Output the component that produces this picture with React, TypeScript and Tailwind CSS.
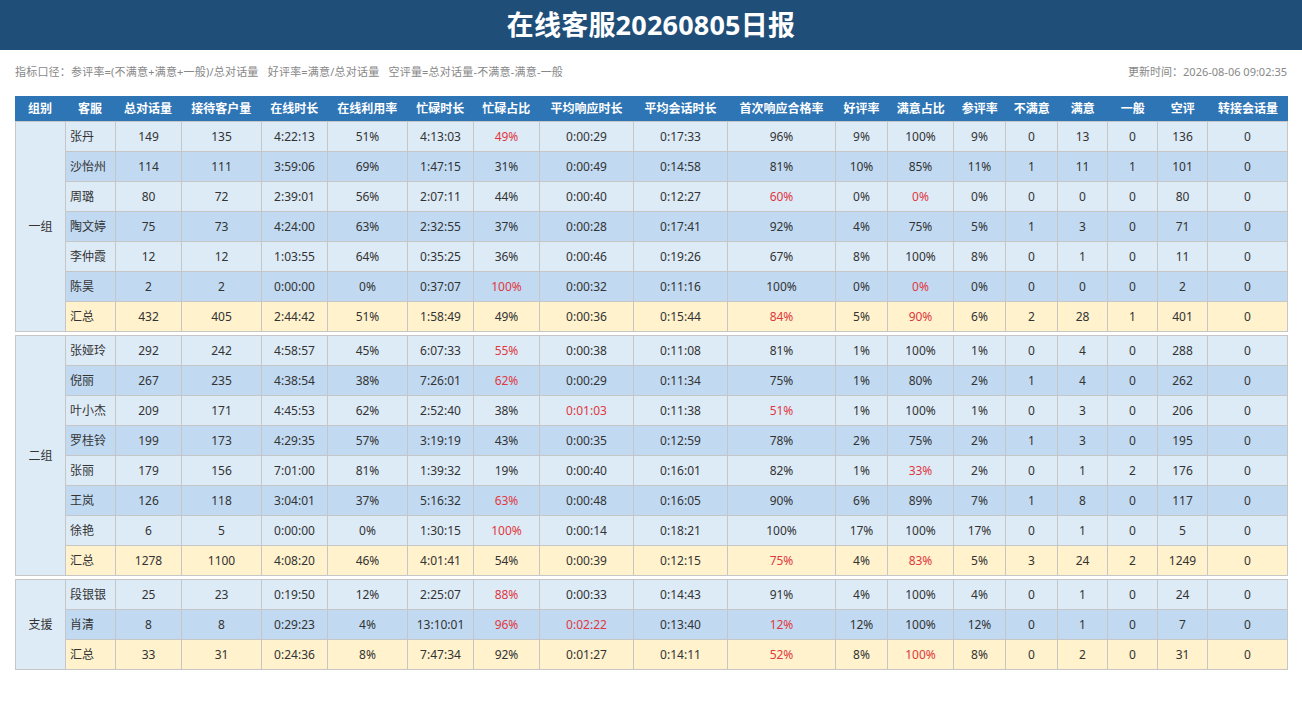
// Daily report for online customer service, grouped table

const columns = [
  { title: '组别', w: 50 },
  { title: '客服', w: 50 },
  { title: '总对话量', w: 66 },
  { title: '接待客户量', w: 80 },
  { title: '在线时长', w: 66 },
  { title: '在线利用率', w: 80 },
  { title: '忙碌时长', w: 66 },
  { title: '忙碌占比', w: 66 },
  { title: '平均响应时长', w: 94 },
  { title: '平均会话时长', w: 94 },
  { title: '首次响应合格率', w: 108 },
  { title: '好评率', w: 52 },
  { title: '满意占比', w: 66 },
  { title: '参评率', w: 52 },
  { title: '不满意', w: 52 },
  { title: '满意', w: 50 },
  { title: '一般', w: 50 },
  { title: '空评', w: 50 },
  { title: '转接会话量', w: 80 },
];

// "!" prefix marks a value shown in red
const groups: { name: string; rows: string[][] }[] = [
  {
    name: '一组',
    rows: [
      ['张丹', '149', '135', '4:22:13', '51%', '4:13:03', '!49%', '0:00:29', '0:17:33', '96%', '9%', '100%', '9%', '0', '13', '0', '136', '0'],
      ['沙怡州', '114', '111', '3:59:06', '69%', '1:47:15', '31%', '0:00:49', '0:14:58', '81%', '10%', '85%', '11%', '1', '11', '1', '101', '0'],
      ['周璐', '80', '72', '2:39:01', '56%', '2:07:11', '44%', '0:00:40', '0:12:27', '!60%', '0%', '!0%', '0%', '0', '0', '0', '80', '0'],
      ['陶文婷', '75', '73', '4:24:00', '63%', '2:32:55', '37%', '0:00:28', '0:17:41', '92%', '4%', '75%', '5%', '1', '3', '0', '71', '0'],
      ['李仲霞', '12', '12', '1:03:55', '64%', '0:35:25', '36%', '0:00:46', '0:19:26', '67%', '8%', '100%', '8%', '0', '1', '0', '11', '0'],
      ['陈昊', '2', '2', '0:00:00', '0%', '0:37:07', '!100%', '0:00:32', '0:11:16', '100%', '0%', '!0%', '0%', '0', '0', '0', '2', '0'],
      ['汇总', '432', '405', '2:44:42', '51%', '1:58:49', '49%', '0:00:36', '0:15:44', '!84%', '5%', '!90%', '6%', '2', '28', '1', '401', '0'],
    ],
  },
  {
    name: '二组',
    rows: [
      ['张娅玲', '292', '242', '4:58:57', '45%', '6:07:33', '!55%', '0:00:38', '0:11:08', '81%', '1%', '100%', '1%', '0', '4', '0', '288', '0'],
      ['倪丽', '267', '235', '4:38:54', '38%', '7:26:01', '!62%', '0:00:29', '0:11:34', '75%', '1%', '80%', '2%', '1', '4', '0', '262', '0'],
      ['叶小杰', '209', '171', '4:45:53', '62%', '2:52:40', '38%', '!0:01:03', '0:11:38', '!51%', '1%', '100%', '1%', '0', '3', '0', '206', '0'],
      ['罗桂铃', '199', '173', '4:29:35', '57%', '3:19:19', '43%', '0:00:35', '0:12:59', '78%', '2%', '75%', '2%', '1', '3', '0', '195', '0'],
      ['张丽', '179', '156', '7:01:00', '81%', '1:39:32', '19%', '0:00:40', '0:16:01', '82%', '1%', '!33%', '2%', '0', '1', '2', '176', '0'],
      ['王岚', '126', '118', '3:04:01', '37%', '5:16:32', '!63%', '0:00:48', '0:16:05', '90%', '6%', '89%', '7%', '1', '8', '0', '117', '0'],
      ['徐艳', '6', '5', '0:00:00', '0%', '1:30:15', '!100%', '0:00:14', '0:18:21', '100%', '17%', '100%', '17%', '0', '1', '0', '5', '0'],
      ['汇总', '1278', '1100', '4:08:20', '46%', '4:01:41', '54%', '0:00:39', '0:12:15', '!75%', '4%', '!83%', '5%', '3', '24', '2', '1249', '0'],
    ],
  },
  {
    name: '支援',
    rows: [
      ['段银银', '25', '23', '0:19:50', '12%', '2:25:07', '!88%', '0:00:33', '0:14:43', '91%', '4%', '100%', '4%', '0', '1', '0', '24', '0'],
      ['肖清', '8', '8', '0:29:23', '4%', '13:10:01', '!96%', '!0:02:22', '0:13:40', '!12%', '12%', '100%', '12%', '0', '1', '0', '7', '0'],
      ['汇总', '33', '31', '0:24:36', '8%', '7:47:34', '92%', '0:01:27', '0:14:11', '!52%', '8%', '!100%', '8%', '0', '2', '0', '31', '0'],
    ],
  },
];

const Cols = () => (
  <colgroup>
    {columns.map((c) => (
      <col key={c.title} style={{ width: c.w }} />
    ))}
  </colgroup>
);

const GroupTable = ({ name, rows, first }: { name: string; rows: string[][]; first: boolean }) => (
  <table className={`table-fixed border-collapse w-[1273px] ${first ? '' : 'mt-[3px]'}`}>
    <Cols />
    <tbody>
      {rows.map((row, i) => {
        const isTotal = i === rows.length - 1;
        const bg = isTotal ? 'bg-[#fff2cc]' : i % 2 === 0 ? 'bg-[#ddebf7]' : 'bg-[#c1daf2]';
        return (
          <tr key={i} className={`h-[30px] ${bg}`}>
            {i === 0 && (
              <td rowSpan={rows.length} className="border border-[#c6c6c6] bg-[#ddebf7] text-center">
                {name}
              </td>
            )}
            {row.map((v, j) => {
              const red = v.startsWith('!');
              const text = red ? v.slice(1) : v;
              return (
                <td
                  key={j}
                  className={`border border-[#c6c6c6] ${j === 0 ? 'text-left pl-[4px]' : 'text-center'} ${red ? 'text-[#e0383e]' : ''}`}
                >
                  {text}
                </td>
              );
            })}
          </tr>
        );
      })}
    </tbody>
  </table>
);

export default function App() {
  return (
    <div className="w-[1302px] h-[721px] bg-white text-[#333] text-[12px] font-['Noto_Sans','Noto_Sans_CJK_SC',sans-serif]">
      {/* Title bar */}
      <div className="h-[50px] bg-[#1f4e79] flex items-center justify-center">
        <h1 className="text-white text-[27px] font-bold tracking-[0.2px]">在线客服20260805日报</h1>
      </div>

      {/* Metric notes */}
      <div className="flex justify-between items-center px-[15px] h-[44px] text-[11px] text-[#888]">
        <span className="tracking-[0.2px]">指标口径：参评率=(不满意+满意+一般)/总对话量&nbsp;&nbsp;&nbsp;好评率=满意/总对话量&nbsp;&nbsp;&nbsp;空评量=总对话量-不满意-满意-一般</span>
        <span>更新时间：2026-08-06 09:02:35</span>
      </div>

      <div className="pl-[15px] mt-[2px]">
        <table className="table-fixed border-collapse w-[1273px]">
          <Cols />
          <thead>
            <tr className="h-[25px] bg-[#2e75b6] text-white text-[12px]">
              {columns.map((c) => (
                <th key={c.title} className="font-bold text-center whitespace-nowrap">
                  {c.title}
                </th>
              ))}
            </tr>
          </thead>
        </table>
        {groups.map((g, i) => (
          <GroupTable key={g.name} name={g.name} rows={g.rows} first={i === 0} />
        ))}
      </div>
    </div>
  );
}
